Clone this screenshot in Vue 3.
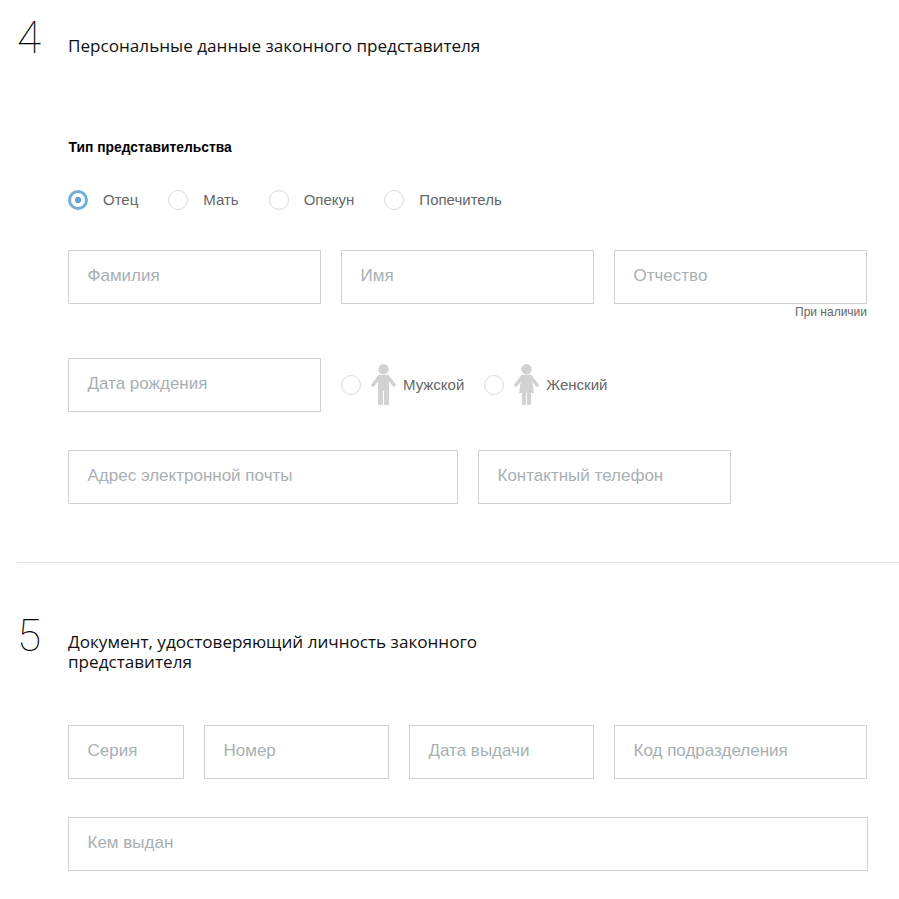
<script setup>
const kinds = ['Отец', 'Мать', 'Опекун', 'Попечитель']
</script>

<template>
  <div class="page">
    <section class="sec sec-4">
      <header class="head">
        <span class="num">4</span>
        <h2 class="title">Персональные данные законного представителя</h2>
      </header>
      <div class="body">
        <div class="label">Тип представительства</div>
        <div class="kinds">
          <div v-for="(k, i) in kinds" :key="k" class="radio-item">
            <span class="radio" :class="{ on: i === 0 }"></span>
            <span class="radio-text">{{ k }}</span>
          </div>
        </div>
        <div class="row r1">
          <div class="field w253">Фамилия</div>
          <div class="field w253">Имя</div>
          <div class="with-hint">
            <div class="field w253">Отчество</div>
            <div class="hint">При наличии</div>
          </div>
        </div>
        <div class="row r2">
          <div class="field w253">Дата рождения</div>
          <div class="genders">
            <div class="gender">
              <span class="radio"></span>
              <svg class="person" width="26" height="42" viewBox="0 0 26 42">
                <circle cx="12.5" cy="5.2" r="5.2" fill="#d2d2d2" />
                <path d="M7 12.500q0-1.500 1.500-1.500h8q1.500 0 1.500 1.500V41h-5V27h-1v14H7z" fill="#d2d2d2" />
                <path d="M8.500 12.500 2 21M16.500 12.500 23 21" stroke="#d2d2d2" stroke-width="3.6" stroke-linecap="round" fill="none" />
              </svg>
              <span class="radio-text">Мужской</span>
            </div>
            <div class="gender">
              <span class="radio"></span>
              <svg class="person" width="26" height="42" viewBox="0 0 26 42">
                <circle cx="12.5" cy="5.2" r="5.2" fill="#d2d2d2" />
                <path d="M9.500 11h6q1.500 0 2 1.500L20 29h-3v12h-4V29h-1v12H8V29H5l2.500-16.500q.5-1.500 2-1.500z" fill="#d2d2d2" />
                <path d="M8.500 12.500 2 21M16.500 12.500 23 21" stroke="#d2d2d2" stroke-width="3.6" stroke-linecap="round" fill="none" />
              </svg>
              <span class="radio-text">Женский</span>
            </div>
          </div>
        </div>
        <div class="row r3">
          <div class="field w390">Адрес электронной почты</div>
          <div class="field w253">Контактный телефон</div>
        </div>
      </div>
    </section>

    <section class="sec sec-5">
      <header class="head">
        <span class="num">5</span>
        <h2 class="title">Документ, удостоверяющий личность законного представителя</h2>
      </header>
      <div class="body">
        <div class="row r4">
          <div class="field w116">Серия</div>
          <div class="field w185">Номер</div>
          <div class="field w185">Дата выдачи</div>
          <div class="field w253">Код подразделения</div>
        </div>
        <div class="row r5">
          <div class="field w800">Кем выдан</div>
        </div>
      </div>
    </section>
  </div>
</template>

<style scoped>
.page {
  width: 899px;
  height: 899px;
  overflow: hidden;
  background: #fff;
  font-family: "Liberation Sans", Arial, sans-serif;
}
.sec {
  margin-left: 17px;
}
.sec-4 {
  height: 563px;
  border-bottom: 1px solid #e0e4e8;
  box-sizing: border-box;
}
.head {
  display: flex;
  align-items: flex-start;
}
.sec-4 .head {
  padding-top: 15px;
}
.sec-5 .head {
  padding-top: 50px;
}
.num {
  width: 51px;
  flex: none;
  font-family: Roboto, sans-serif;
  font-weight: 100;
  font-size: 44px;
  line-height: 46px;
  color: #000;
}
.title {
  margin: 0;
  width: 425px;
  padding-top: 21px;
  font-family: "Open Sans", sans-serif;
  font-weight: 400;
  font-size: 17.12px;
  line-height: 20px;
  color: #111;
}
.sec-5 .title {
  padding-top: 19px;
}
.body {
  padding-left: 51px;
}
.label {
  margin-top: 77px;
  margin-left: 0.5px;
  font-size: 13.85px;
  line-height: 18px;
  font-weight: 700;
  color: #000;
}
.kinds {
  display: flex;
  margin-top: 34px;
  gap: 30px;
  height: 20px;
}
.radio-item, .gender {
  display: flex;
  align-items: center;
}
.radio {
  width: 20px;
  height: 20px;
  box-sizing: border-box;
  border: 1px solid #d8dcdc;
  border-radius: 50%;
  flex: none;
  background: #fff;
}
.radio.on {
  border: 3px solid #6eafdc;
  background: radial-gradient(circle, #6ba3d0 0 3px, #fff 3.5px);
}
.radio-text {
  margin-left: 15px;
  font-size: 15px;
  line-height: 20px;
  color: #666;
}
.gender .radio-text {
  margin-left: 6px;
}
.person {
  margin-left: 10px;
  flex: none;
}
.row {
  display: flex;
  gap: 20px;
}
.r1 { margin-top: 40px; height: 72px; }
.r2 { margin-top: 36px; }
.r3 { margin-top: 38px; }
.r4 { margin-top: 53px; }
.r5 { margin-top: 38px; }
.field {
  box-sizing: border-box;
  height: 54px;
  border: 1px solid #d2d2d2;
  padding-left: 18.5px;
  font-size: 17px;
  line-height: 50px;
  color: #a8b0b4;
  flex: none;
}
.w116 { width: 116px; }
.w185 { width: 185px; }
.w253 { width: 253px; }
.w390 { width: 390px; }
.w800 { width: 800px; }
.with-hint {
  width: 253px;
}
.hint {
  text-align: right;
  font-size: 12px;
  line-height: 16px;
  color: #666;
}
.genders {
  display: flex;
  gap: 20px;
  height: 54px;
  align-items: center;
}
</style>

<style>
body { background: #fff; }
</style>
